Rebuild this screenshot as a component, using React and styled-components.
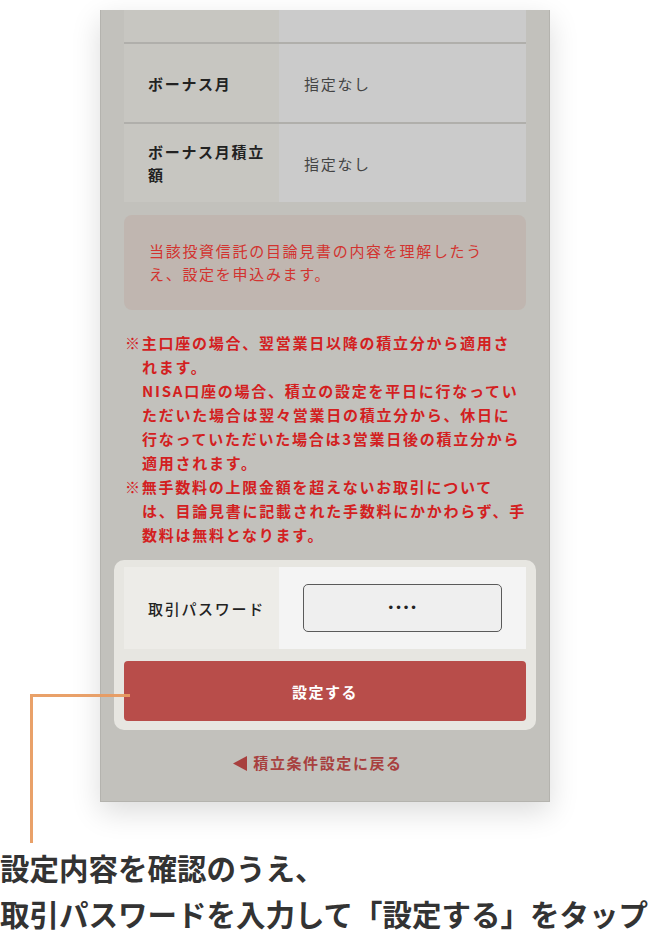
import React from 'react';
import styled, { createGlobalStyle } from 'styled-components';

const GlobalStyle = createGlobalStyle`
  body {
    margin: 0;
    background: #fff;
    font-family: 'Noto Sans CJK JP', 'Noto Sans', sans-serif;
  }
`;

const Page = styled.div`
  position: relative;
  width: 650px;
  height: 935px;
  overflow: hidden;
  background: #fff;
`;

const Frame = styled.div`
  box-sizing: border-box;
  width: 450px;
  height: 792px;
  margin: 10px 0 0 100px;
  padding: 0 23px;
  background: #c2c1bc;
  border: 1px solid #b4b3ae;
  border-top: none;
  box-shadow: 0 10px 28px rgba(0, 0, 0, 0.14);
  overflow: hidden;
`;

const Table = styled.div`
  display: flex;
  flex-direction: column;
`;

const Row = styled.div`
  box-sizing: border-box;
  display: grid;
  grid-template-columns: 155px 1fr;
  height: ${(p) => p.$h}px;
  border-top: ${(p) => (p.$first ? 'none' : '2px solid #b0afab')};
`;

const Label = styled.div`
  display: flex;
  align-items: center;
  padding: 0 10px 0 24px;
  background: #c7c6c1;
  color: #222;
  font-size: 15px;
  font-weight: 700;
  letter-spacing: 1.7px;
  line-height: 23px;
`;

const Value = styled.div`
  display: flex;
  align-items: center;
  padding-left: 25px;
  background: #cbcbcb;
  color: #444;
  font-size: 15px;
  letter-spacing: 1.7px;
`;

const Notice = styled.div`
  margin-top: 13px;
  height: 95px;
  box-sizing: border-box;
  padding: 24px 20px 0 25px;
  border-radius: 8px;
  background: #c0b6b0;
  color: #d2332f;
  font-size: 15px;
  letter-spacing: 1.7px;
  line-height: 23px;
`;

const Notes = styled.div`
  margin-top: 21px;
  color: #d3201f;
  font-size: 15px;
  font-weight: 700;
  letter-spacing: 1.75px;
  line-height: 24px;
  white-space: nowrap;
`;

const NoteItem = styled.p`
  margin: 0;
  padding-left: 18px;
  text-indent: -17px;
`;

const PassBox = styled.div`
  margin: 13px -10px 0;
  padding: 7px 10px 9px;
  border-radius: 10px;
  background: #e7e6e1;
  display: flex;
  flex-direction: column;
  gap: 12px;
`;

const PassRow = styled.div`
  display: grid;
  grid-template-columns: 155px 1fr;
  height: 82px;
`;

const PassLabel = styled.div`
  display: flex;
  align-items: center;
  padding-left: 24px;
  background: #edece8;
  color: #222;
  font-size: 15px;
  font-weight: 500;
  letter-spacing: 1.7px;
`;

const PassCell = styled.div`
  display: flex;
  align-items: center;
  padding-left: 24px;
  background: #f4f4f4;
`;

const PassInput = styled.div`
  width: 199px;
  height: 48px;
  box-sizing: border-box;
  border: 1px solid #5a5a5a;
  border-radius: 5px;
  background: #efefef;
  display: flex;
  align-items: center;
  justify-content: center;
  color: #222;
  font-family: 'DejaVu Sans', sans-serif;
  font-size: 12px;
  letter-spacing: 0.5px;
`;

const SubmitButton = styled.button`
  height: 60px;
  border: none;
  border-radius: 4px;
  background: #b84d4a;
  color: #fff;
  font-family: inherit;
  font-size: 15px;
  font-weight: 700;
  letter-spacing: 1.5px;
`;

const BackLink = styled.div`
  margin-top: 22px;
  padding-right: 14px;
  display: flex;
  align-items: center;
  justify-content: center;
  gap: 6px;
  color: #a8403e;
  font-size: 15px;
  font-weight: 700;
  letter-spacing: 1.6px;
  line-height: 22px;
`;

const Caption = styled.div`
  margin-top: 42px;
  color: #333;
  font-size: 29.5px;
  font-weight: 700;
  line-height: 46px;
  white-space: nowrap;
`;

const Callout = styled.div`
  position: absolute;
  left: 30px;
  top: 694px;
  width: 97px;
  height: 146px;
  border-left: 3px solid #e89c62;
  border-top: 3px solid #e89c62;
  opacity: 0.95;
`;

const App = () => (
  <Page>
    <GlobalStyle />
    <Frame>
      <Table>
        <Row $h={32} $first>
          <Label />
          <Value />
        </Row>
        <Row $h={80}>
          <Label>ボーナス月</Label>
          <Value>指定なし</Value>
        </Row>
        <Row $h={80}>
          <Label>ボーナス月積立額</Label>
          <Value>指定なし</Value>
        </Row>
      </Table>
      <Notice>
        当該投資信託の目論見書の内容を理解したう
        <br />
        え、設定を申込みます。
      </Notice>
      <Notes>
        <NoteItem>
          ※主口座の場合、翌営業日以降の積立分から適用さ
          <br />
          れます。
          <br />
          NISA口座の場合、積立の設定を平日に行なってい
          <br />
          ただいた場合は翌々営業日の積立分から、休日に
          <br />
          行なっていただいた場合は3営業日後の積立分から
          <br />
          適用されます。
        </NoteItem>
        <NoteItem>
          ※無手数料の上限金額を超えないお取引について
          <br />
          は、目論見書に記載された手数料にかかわらず、手
          <br />
          数料は無料となります。
        </NoteItem>
      </Notes>
      <PassBox>
        <PassRow>
          <PassLabel>取引パスワード</PassLabel>
          <PassCell>
            <PassInput>••••</PassInput>
          </PassCell>
        </PassRow>
        <SubmitButton>設定する</SubmitButton>
      </PassBox>
      <BackLink>
        <svg width="14" height="15" viewBox="0 0 14 15">
          <polygon points="0,7.5 14,0 14,15" fill="#a8403e" />
        </svg>
        積立条件設定に戻る
      </BackLink>
    </Frame>
    <Caption>
      設定内容を確認のうえ、
      <br />
      取引パスワードを入力して「設定する」をタップ
    </Caption>
    <Callout />
  </Page>
);

export default App;
